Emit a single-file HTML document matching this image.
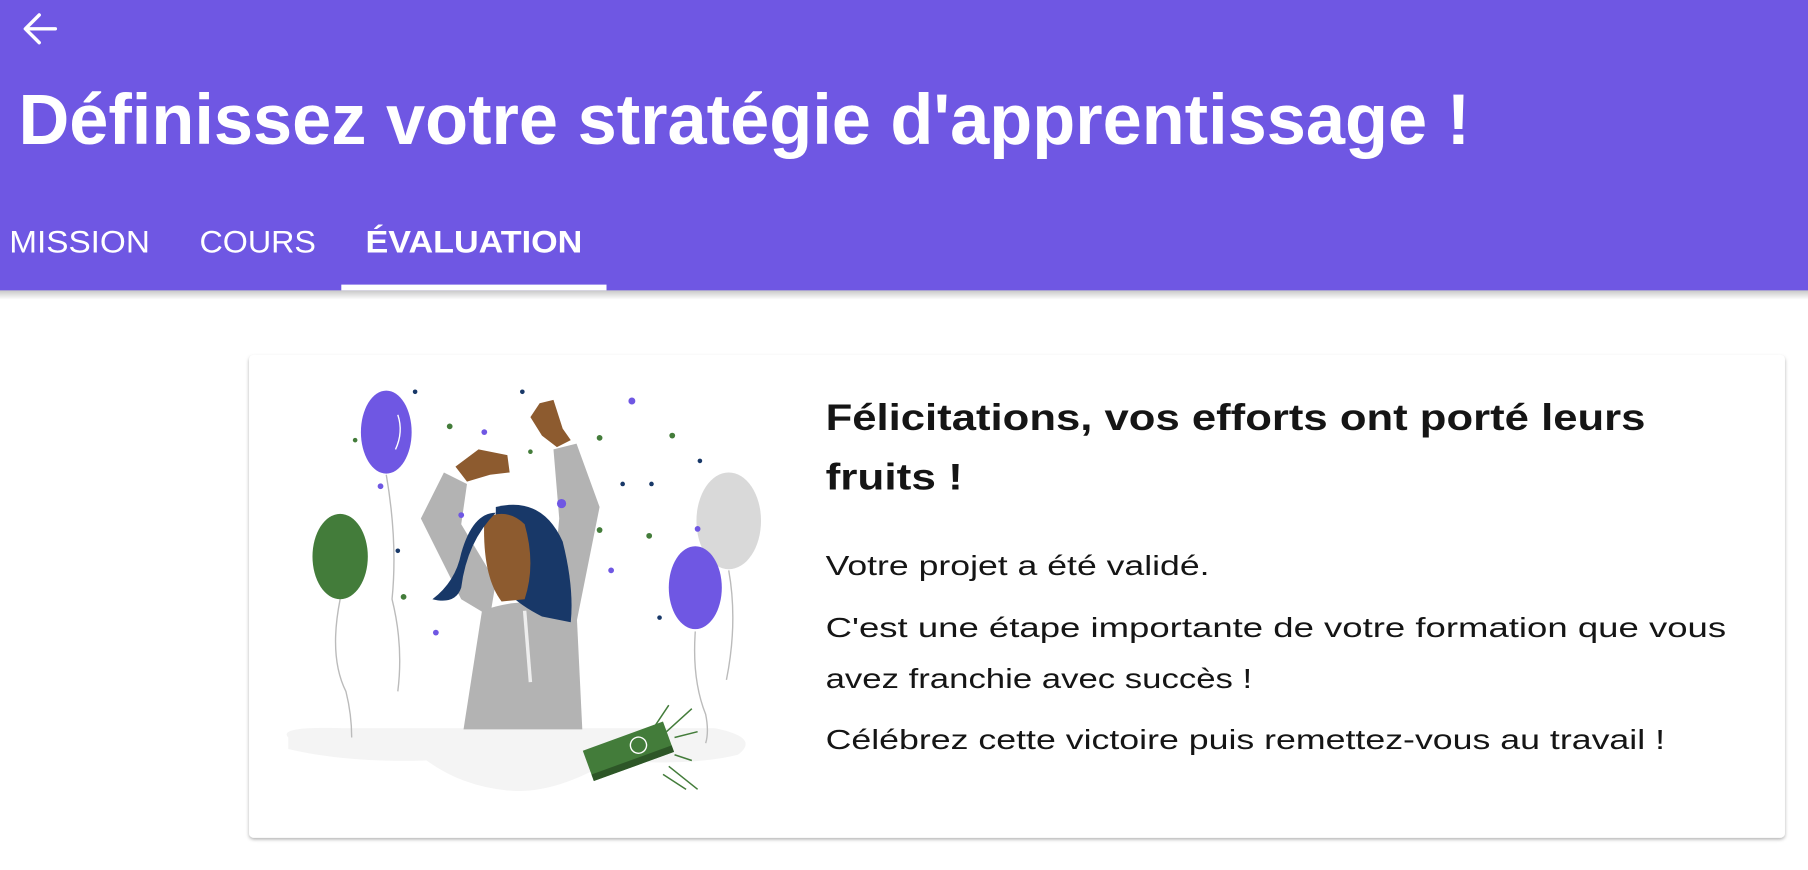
<!DOCTYPE html>
<html><head><meta charset="utf-8"><style>
html,body{margin:0;padding:0;background:#fff;overflow:hidden}
#w{width:1568px;height:755px;transform:scale(1.15306,1.1523);transform-origin:0 0;position:relative}
svg{display:block}
text{font-family:"Liberation Sans",sans-serif}
</style></head><body><div id="w">
<svg width="1568" height="755" viewBox="0 0 1568 755">
<defs>
<linearGradient id="sh" x1="0" y1="0" x2="0" y2="1"><stop offset="0" stop-color="#000" stop-opacity=".22"/><stop offset="1" stop-color="#000" stop-opacity="0"/></linearGradient>
<filter id="cs" x="-5%" y="-5%" width="110%" height="115%"><feDropShadow dx="0" dy="1.5" stdDeviation="1.5" flood-opacity=".3"/></filter>
</defs>
<rect x="0" y="0" width="1568" height="252" fill="#6f57e3"/>
<rect x="0" y="252" width="1568" height="8" fill="url(#sh)"/>
<path d="M48 25H23M34 13L22 25L34 37" stroke="#fff" stroke-width="3" fill="none" stroke-linecap="round" stroke-linejoin="round"/>
<text x="16" y="125" font-size="62" font-weight="bold" fill="#fff" textLength="1259" lengthAdjust="spacingAndGlyphs">Définissez votre stratégie d'apprentissage !</text>
<text x="8" y="219" font-size="27" fill="#fff" textLength="122" lengthAdjust="spacingAndGlyphs">MISSION</text>
<text x="173" y="219" font-size="27" fill="#fff" textLength="101" lengthAdjust="spacingAndGlyphs">COURS</text>
<text x="317" y="219" font-size="27" font-weight="bold" fill="#fff" textLength="188" lengthAdjust="spacingAndGlyphs">ÉVALUATION</text>
<rect x="296" y="247" width="230" height="5" fill="#fff"/>

<rect x="216" y="308" width="1332" height="419" rx="4" fill="#fff" filter="url(#cs)"/>

<!-- illustration -->
<path d="M250 640 Q240 630 300 632 L620 632 Q660 640 640 655 Q600 665 530 660 Q480 690 440 686 Q400 682 370 660 Q300 662 250 650Z" fill="#f4f4f4"/>
<g fill="none" stroke="#bbb" stroke-width="1.2">
<path d="M335 412 Q345 470 340 520 Q350 560 345 600"/>
<path d="M295 520 Q285 570 300 600 Q305 620 305 640"/>
<path d="M632 495 Q640 540 630 590"/>
<path d="M603 548 Q600 590 612 620 Q615 635 612 645"/>
</g>
<ellipse cx="335" cy="375" rx="22" ry="36" fill="#6f57e3"/>
<ellipse cx="295" cy="483" rx="24" ry="37" fill="#437c3a"/>
<ellipse cx="632" cy="452" rx="28" ry="42" fill="#d9d9d9"/>
<ellipse cx="603" cy="510" rx="23" ry="36" fill="#6f57e3"/>
<path d="M345 360 Q350 375 343 390" stroke="#fff" stroke-width="1.2" fill="none"/>
<!-- person -->
<path d="M418 530 L402 633 L505 633 L500 530 Q460 515 418 530Z" fill="#b3b3b3"/>
<path d="M385 410 L365 450 L400 520 L425 535 L430 505 L400 455 L405 420Z" fill="#b3b3b3"/>
<path d="M480 390 L500 385 L520 440 L500 540 L478 525 L485 450Z" fill="#b3b3b3"/>
<path d="M430 440 Q470 430 488 470 Q498 510 495 540 L470 535 Q440 520 430 500Z" fill="#183868"/>
<path d="M420 450 Q440 440 455 455 Q465 490 455 520 L435 522 Q418 500 420 450Z" fill="#8d5b2f"/>
<path d="M430 445 Q405 470 400 510 Q395 525 375 520 Q395 505 400 480 Q410 445 430 445Z" fill="#183868"/>
<path d="M395 405 L415 390 L440 395 L442 410 L425 412 L405 418Z" fill="#8d5b2f"/>
<path d="M468 350 L480 347 L488 372 L495 382 L483 388 L470 378 L460 362Z" fill="#8d5b2f"/>
<path d="M455 530 L460 592" stroke="#eee" stroke-width="3"/>
<!-- phone -->
<g transform="rotate(-20 545 652)"><rect x="508" y="638" width="74" height="28" fill="#437c3a"/><rect x="508" y="660" width="74" height="6" fill="#2d5627"/><circle cx="555" cy="650" r="7" fill="none" stroke="#fff" stroke-width="1.2"/></g>
<g stroke="#437c3a" stroke-width="1.3"><path d="M568 630L580 612M578 635L600 615M585 640L605 635M585 655L600 660M580 665L605 685M575 672L595 685"/></g>
<!-- confetti -->
<g fill="#6f57e3"><circle cx="548" cy="348" r="3"/><circle cx="420" cy="375" r="2.5"/><circle cx="487" cy="437" r="4"/><circle cx="330" cy="422" r="2.5"/><circle cx="378" cy="549" r="2.5"/><circle cx="530" cy="495" r="2.5"/><circle cx="605" cy="459" r="2.5"/><circle cx="400" cy="447" r="2.5"/></g>
<g fill="#437c3a"><circle cx="390" cy="370" r="2.5"/><circle cx="583" cy="378" r="2.5"/><circle cx="520" cy="380" r="2.5"/><circle cx="308" cy="382" r="2"/><circle cx="520" cy="460" r="2.5"/><circle cx="563" cy="465" r="2.5"/><circle cx="350" cy="518" r="2.5"/><circle cx="460" cy="392" r="2"/></g>
<g fill="#183868"><circle cx="360" cy="340" r="2"/><circle cx="453" cy="340" r="2"/><circle cx="607" cy="400" r="2"/><circle cx="540" cy="420" r="2"/><circle cx="345" cy="478" r="2"/><circle cx="572" cy="536" r="2"/><circle cx="565" cy="420" r="2"/></g>

<text x="716" y="373" font-size="32" font-weight="bold" fill="#151515" textLength="711" lengthAdjust="spacingAndGlyphs">Félicitations, vos efforts ont porté leurs</text>
<text x="716" y="425" font-size="32" font-weight="bold" fill="#151515" textLength="119" lengthAdjust="spacingAndGlyphs">fruits !</text>
<g font-size="24" fill="#151515">
<text x="716" y="499" textLength="333" lengthAdjust="spacingAndGlyphs">Votre projet a été validé.</text>
<text x="716" y="553" textLength="781" lengthAdjust="spacingAndGlyphs">C'est une étape importante de votre formation que vous</text>
<text x="716" y="597" textLength="370" lengthAdjust="spacingAndGlyphs">avez franchie avec succès !</text>
<text x="716" y="650" textLength="728" lengthAdjust="spacingAndGlyphs">Célébrez cette victoire puis remettez-vous au travail !</text>
</g>
</svg></div></body></html>
